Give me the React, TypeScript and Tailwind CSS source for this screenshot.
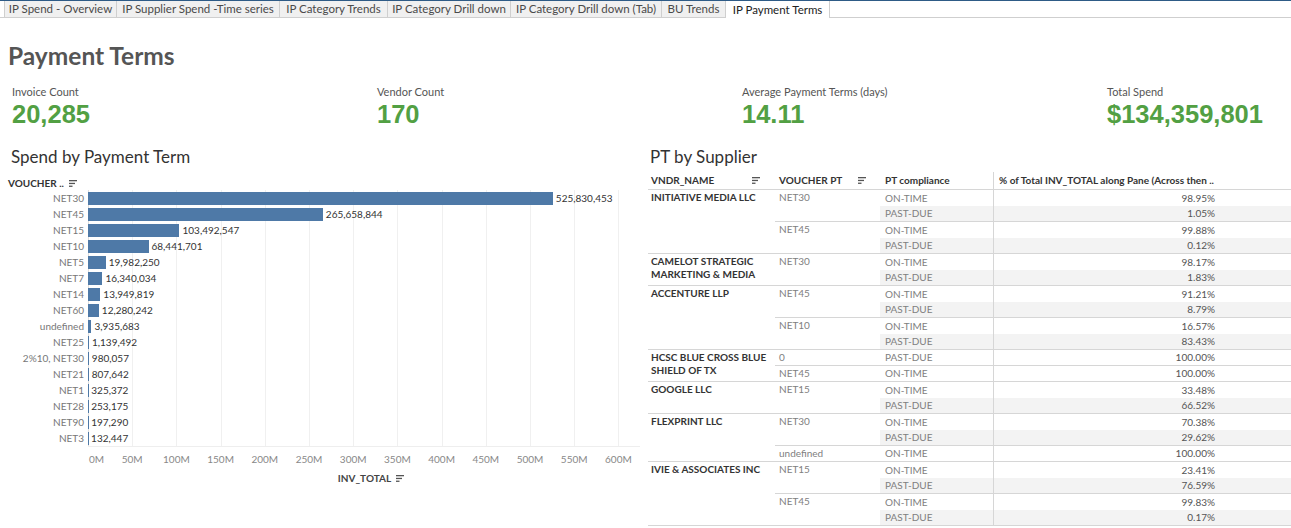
import React from 'react';

const tabs = [
  { label: 'IP Spend - Overview', w: 'w-[113px]' },
  { label: 'IP Supplier Spend -Time series', w: 'w-[163px]' },
  { label: 'IP Category Trends', w: 'w-[108px]' },
  { label: 'IP Category Drill down', w: 'w-[123px]' },
  { label: 'IP Category Drill down (Tab)', w: 'w-[151px]' },
  { label: 'BU Trends', w: 'w-[64px]' },
  { label: 'IP Payment Terms', w: 'w-[104px]', active: true },
];

const kpis = [
  { label: 'Invoice Count', value: '20,285' },
  { label: 'Vendor Count', value: '170' },
  { label: 'Average Payment Terms (days)', value: '14.11' },
  { label: 'Total Spend', value: '$134,359,801' },
];

const terms: [string, number][] = [
  ['NET30', 525830453],
  ['NET45', 265658844],
  ['NET15', 103492547],
  ['NET10', 68441701],
  ['NET5', 19982250],
  ['NET7', 16340034],
  ['NET14', 13949819],
  ['NET60', 12280242],
  ['undefined', 3935683],
  ['NET25', 1139492],
  ['2%10, NET30', 980057],
  ['NET21', 807642],
  ['NET1', 325372],
  ['NET28', 253175],
  ['NET90', 197290],
  ['NET3', 132447],
];

// px per million on the x axis
const SCALE = 0.884;
const ticks = [0, 50, 100, 150, 200, 250, 300, 350, 400, 450, 500, 550, 600];

type Group = { pt: string; rows: [string, string][] };
const vendors: { name: string; groups: Group[] }[] = [
  {
    name: 'INITIATIVE MEDIA LLC',
    groups: [
      { pt: 'NET30', rows: [['ON-TIME', '98.95%'], ['PAST-DUE', '1.05%']] },
      { pt: 'NET45', rows: [['ON-TIME', '99.88%'], ['PAST-DUE', '0.12%']] },
    ],
  },
  {
    name: 'CAMELOT STRATEGIC MARKETING & MEDIA',
    groups: [{ pt: 'NET30', rows: [['ON-TIME', '98.17%'], ['PAST-DUE', '1.83%']] }],
  },
  {
    name: 'ACCENTURE LLP',
    groups: [
      { pt: 'NET45', rows: [['ON-TIME', '91.21%'], ['PAST-DUE', '8.79%']] },
      { pt: 'NET10', rows: [['ON-TIME', '16.57%'], ['PAST-DUE', '83.43%']] },
    ],
  },
  {
    name: 'HCSC BLUE CROSS BLUE SHIELD OF TX',
    groups: [
      { pt: '0', rows: [['PAST-DUE', '100.00%']] },
      { pt: 'NET45', rows: [['ON-TIME', '100.00%']] },
    ],
  },
  {
    name: 'GOOGLE LLC',
    groups: [{ pt: 'NET15', rows: [['ON-TIME', '33.48%'], ['PAST-DUE', '66.52%']] }],
  },
  {
    name: 'FLEXPRINT LLC',
    groups: [
      { pt: 'NET30', rows: [['ON-TIME', '70.38%'], ['PAST-DUE', '29.62%']] },
      { pt: 'undefined', rows: [['ON-TIME', '100.00%']] },
    ],
  },
  {
    name: 'IVIE & ASSOCIATES INC',
    groups: [
      { pt: 'NET15', rows: [['ON-TIME', '23.41%'], ['PAST-DUE', '76.59%']] },
      { pt: 'NET45', rows: [['ON-TIME', '99.83%'], ['PAST-DUE', '0.17%']] },
    ],
  },
];

const SortIcon = () => (
  <svg width="8" height="7" viewBox="0 0 8 7" className="shrink-0">
    <rect x="0" y="0" width="8" height="1.3" fill="#555" />
    <rect x="0" y="2.8" width="6" height="1.3" fill="#555" />
    <rect x="0" y="5.6" width="3.5" height="1.3" fill="#555" />
  </svg>
);

const App = () => {
  return (
    <div className="w-[1291px] h-[528px] bg-white overflow-hidden font-['Lato','Noto_Sans',sans-serif] text-[#333]">
      {/* Tab strip */}
      <div className="h-px bg-[#2e5b86]" />
      <div className="flex h-[17px] border-b border-[#cfcfcf] pl-[4px]">
        {tabs.map((t) => (
          <div
            key={t.label}
            className={
              'flex items-center justify-center border-r border-[#cfcfcf] text-[11.5px] leading-none ' +
              t.w +
              (t.active ? ' bg-white h-[17px] text-[#222]' : ' bg-[#f0f0f0] text-[#4a4a4a]') +
              (t.label === 'IP Spend - Overview' ? ' border-l' : '')
            }
          >
            {t.label}
          </div>
        ))}
      </div>

      {/* Title */}
      <h1 className="mt-[24px] ml-[8px] h-[28px] leading-[28px] text-[24.5px] font-bold text-[#555]">Payment Terms</h1>

      {/* KPI strip */}
      <div className="mt-[15px] ml-[12px] flex">
        {kpis.map((k) => (
          <div key={k.label} className="w-[365px] shrink-0">
            <div className="h-[14px] leading-[14px] text-[11px] text-[#555]">{k.label}</div>
            <div className="mt-px h-[28px] leading-[28px] text-[25.5px] font-bold text-[#52a043] font-['Liberation_Sans',Arial,sans-serif]">
              {k.value}
            </div>
          </div>
        ))}
      </div>

      <div className="mt-[19px] flex">
        {/* Spend by Payment Term */}
        <div className="w-[640px] shrink-0">
          <div className="ml-[11px] h-[20px] leading-[20px] text-[17px] text-[#333]">Spend by Payment Term</div>
          <div className="mt-[9px] ml-[8px] h-[14px] flex items-center gap-[5px] text-[10px] font-bold text-[#333]">
            <span>VOUCHER ..</span>
            <SortIcon />
          </div>
          <div className="relative">
            <div className="absolute top-0 bottom-0 left-[88px] w-px bg-[#dedede]" />
            {ticks.slice(1).map((t) => (
              <div
                key={t}
                className="absolute top-0 bottom-0 w-px bg-[#f0f0f0]"
                style={{ left: 88 + t * SCALE }}
              />
            ))}
            {terms.map(([name, v]) => (
              <div key={name} className="relative h-[16px] flex items-center">
                <div className="w-[88px] shrink-0 pr-[4px] text-right text-[10px] text-[#777]">{name}</div>
                <div className="h-[13px] bg-[#4e79a7] shrink-0" style={{ width: (v / 1e6) * SCALE }} />
                <div className="ml-[3px] text-[10px] text-[#333]">{v.toLocaleString('en-US')}</div>
              </div>
            ))}
          </div>
          <div className="ml-[88px] h-px bg-[#eeeeee]" />
          <div className="relative mt-[6px] h-[12px] text-[10px] leading-[12px] text-[#888]">
            {ticks.map((t) =>
              t === 0 ? (
                <span key={t} className="absolute left-[89px]">0M</span>
              ) : (
                <span key={t} className="absolute -translate-x-1/2" style={{ left: 88 + t * SCALE }}>
                  {t}M
                </span>
              )
            )}
          </div>
          <div className="mt-[6px] ml-[88px] pl-[14px] h-[14px] flex items-center justify-center gap-[5px] text-[10px] font-bold text-[#444]">
            <span>INV_TOTAL</span>
            <SortIcon />
          </div>
        </div>

        {/* PT by Supplier */}
        <div className="ml-[8px] flex-1">
          <div className="ml-[2px] h-[20px] leading-[20px] text-[17px] text-[#333]">PT by Supplier</div>
          <div className="mt-[5px] h-[18px] flex border-b border-[#d6d6d6] text-[10px] font-bold text-[#333]">
            <div className="w-[127px] shrink-0 pl-[3px] pr-[15px] flex items-center justify-between">
              <span>VNDR_NAME</span>
              <SortIcon />
            </div>
            <div className="w-[105px] shrink-0 pl-[4px] pr-[14px] flex items-center justify-between">
              <span>VOUCHER PT</span>
              <SortIcon />
            </div>
            <div className="w-[113px] shrink-0 pl-[5px] flex items-center">PT compliance</div>
            <div className="flex-1 border-l border-[#d6d6d6] pl-[5px] flex items-center">
              % of Total INV_TOTAL along Pane (Across then ..
            </div>
          </div>
          {vendors.map((v) => (
            <div key={v.name} className="flex">
              <div className="w-[127px] shrink-0 pl-[3px] pr-[6px] pt-px border-b border-[#d6d6d6] text-[10px] leading-[13px] font-bold text-[#333]">
                {v.name}
              </div>
              <div className="flex-1">
                {v.groups.map((g) => (
                  <div key={g.pt} className="flex">
                    <div className="w-[105px] shrink-0 pl-[4px] pt-px border-b border-[#d6d6d6] text-[10px] leading-[13px] text-[#808080]">
                      {g.pt}
                    </div>
                    <div className="flex-1">
                      {g.rows.map(([status, pct], i) => (
                        <div
                          key={status}
                          className={
                            'flex h-[16px] text-[10px] ' +
                            (i === 1 ? 'bg-[#f3f3f3] ' : '') +
                            (i === g.rows.length - 1 ? 'border-b border-[#d6d6d6]' : '')
                          }
                        >
                          <div className="w-[113px] shrink-0 pl-[5px] flex items-center text-[#808080]">{status}</div>
                          <div className="flex-1 border-l border-[#d6d6d6] pr-[76px] flex items-center justify-end text-[#555]">
                            {pct}
                          </div>
                        </div>
                      ))}
                    </div>
                  </div>
                ))}
              </div>
            </div>
          ))}
        </div>
      </div>
    </div>
  );
};

export default App;
